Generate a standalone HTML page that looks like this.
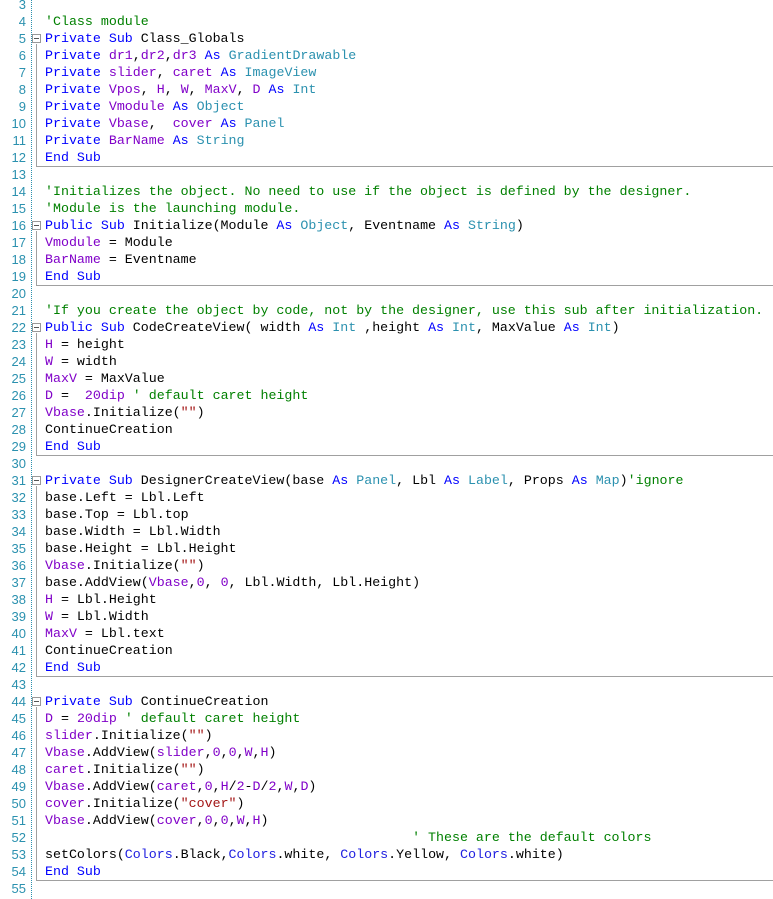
<!DOCTYPE html>
<html><head><meta charset="utf-8"><style>
html,body{margin:0;padding:0;background:#fff;width:773px;height:899px;overflow:hidden;position:relative}
.nums{position:absolute;left:0;top:-4.5px;width:26px;text-align:right;font-family:"Liberation Sans",sans-serif;font-size:13px;color:#2b91af}
.nums div{height:17px;line-height:17px}
.code{position:absolute;left:45px;top:-4.5px;font-family:"Liberation Mono",monospace;font-size:13.3px;color:#000}
.code div{height:17px;line-height:17px;white-space:pre}
.k{color:#0000ff}.v{color:#8000c8}.t{color:#2b91af}.c{color:#008000}.s{color:#a31515}.b{color:#2020e0}
.dot{position:absolute;left:31px;top:0;height:899px;border-left:1px dotted #2b91af}
.f{position:absolute;left:32px;width:7px;height:7px;border:1px solid #999;background:#fff}
.f i{position:absolute;left:1px;top:3px;width:5px;height:1px;background:#555}
.vl{position:absolute;left:36px;width:1px;background:#a0a0a0}
.hl{position:absolute;left:36px;right:0;height:1px;background:#a0a0a0}
</style></head><body>
<div class="dot"></div>
<div class="nums">
<div>3</div><div>4</div><div>5</div><div>6</div><div>7</div><div>8</div><div>9</div><div>10</div><div>11</div><div>12</div><div>13</div><div>14</div><div>15</div><div>16</div><div>17</div><div>18</div><div>19</div><div>20</div><div>21</div><div>22</div><div>23</div><div>24</div><div>25</div><div>26</div><div>27</div><div>28</div><div>29</div><div>30</div><div>31</div><div>32</div><div>33</div><div>34</div><div>35</div><div>36</div><div>37</div><div>38</div><div>39</div><div>40</div><div>41</div><div>42</div><div>43</div><div>44</div><div>45</div><div>46</div><div>47</div><div>48</div><div>49</div><div>50</div><div>51</div><div>52</div><div>53</div><div>54</div><div>55</div>
</div>
<div class="vl" style="top:43.5px;height:122px"></div><div class="hl" style="top:165.5px"></div>
<div class="vl" style="top:230.5px;height:54px"></div><div class="hl" style="top:284.5px"></div>
<div class="vl" style="top:332.5px;height:122px"></div><div class="hl" style="top:454.5px"></div>
<div class="vl" style="top:485.5px;height:190px"></div><div class="hl" style="top:675.5px"></div>
<div class="vl" style="top:706.5px;height:173px"></div><div class="hl" style="top:879.5px"></div>
<div class="f" style="top:33.5px"><i></i></div>
<div class="f" style="top:220.5px"><i></i></div>
<div class="f" style="top:322.5px"><i></i></div>
<div class="f" style="top:475.5px"><i></i></div>
<div class="f" style="top:696.5px"><i></i></div>
<div class="code">
<div> </div>
<div><span class="c">'Class module</span></div>
<div><span class="k">Private Sub</span> Class_Globals</div>
<div><span class="k">Private</span> <span class="v">dr1</span>,<span class="v">dr2</span>,<span class="v">dr3</span> <span class="k">As</span> <span class="t">GradientDrawable</span></div>
<div><span class="k">Private</span> <span class="v">slider</span>, <span class="v">caret</span> <span class="k">As</span> <span class="t">ImageView</span></div>
<div><span class="k">Private</span> <span class="v">Vpos</span>, <span class="v">H</span>, <span class="v">W</span>, <span class="v">MaxV</span>, <span class="v">D</span> <span class="k">As</span> <span class="t">Int</span></div>
<div><span class="k">Private</span> <span class="v">Vmodule</span> <span class="k">As</span> <span class="t">Object</span></div>
<div><span class="k">Private</span> <span class="v">Vbase</span>,  <span class="v">cover</span> <span class="k">As</span> <span class="t">Panel</span></div>
<div><span class="k">Private</span> <span class="v">BarName</span> <span class="k">As</span> <span class="t">String</span></div>
<div><span class="k">End Sub</span></div>
<div> </div>
<div><span class="c">'Initializes the object. No need to use if the object is defined by the designer.</span></div>
<div><span class="c">'Module is the launching module.</span></div>
<div><span class="k">Public Sub</span> Initialize(Module <span class="k">As</span> <span class="t">Object</span>, Eventname <span class="k">As</span> <span class="t">String</span>)</div>
<div><span class="v">Vmodule</span> = Module</div>
<div><span class="v">BarName</span> = Eventname</div>
<div><span class="k">End Sub</span></div>
<div> </div>
<div><span class="c">'If you create the object by code, not by the designer, use this sub after initialization.</span></div>
<div><span class="k">Public Sub</span> CodeCreateView( width <span class="k">As</span> <span class="t">Int</span> ,height <span class="k">As</span> <span class="t">Int</span>, MaxValue <span class="k">As</span> <span class="t">Int</span>)</div>
<div><span class="v">H</span> = height</div>
<div><span class="v">W</span> = width</div>
<div><span class="v">MaxV</span> = MaxValue</div>
<div><span class="v">D</span> =  <span class="v">20dip</span> <span class="c">' default caret height</span></div>
<div><span class="v">Vbase</span>.Initialize(<span class="s">""</span>)</div>
<div>ContinueCreation</div>
<div><span class="k">End Sub</span></div>
<div> </div>
<div><span class="k">Private Sub</span> DesignerCreateView(base <span class="k">As</span> <span class="t">Panel</span>, Lbl <span class="k">As</span> <span class="t">Label</span>, Props <span class="k">As</span> <span class="t">Map</span>)<span class="c">'ignore</span></div>
<div>base.Left = Lbl.Left</div>
<div>base.Top = Lbl.top</div>
<div>base.Width = Lbl.Width</div>
<div>base.Height = Lbl.Height</div>
<div><span class="v">Vbase</span>.Initialize(<span class="s">""</span>)</div>
<div>base.AddView(<span class="v">Vbase</span>,<span class="v">0</span>, <span class="v">0</span>, Lbl.Width, Lbl.Height)</div>
<div><span class="v">H</span> = Lbl.Height</div>
<div><span class="v">W</span> = Lbl.Width</div>
<div><span class="v">MaxV</span> = Lbl.text</div>
<div>ContinueCreation</div>
<div><span class="k">End Sub</span></div>
<div> </div>
<div><span class="k">Private Sub</span> ContinueCreation</div>
<div><span class="v">D</span> = <span class="v">20dip</span> <span class="c">' default caret height</span></div>
<div><span class="v">slider</span>.Initialize(<span class="s">""</span>)</div>
<div><span class="v">Vbase</span>.AddView(<span class="v">slider</span>,<span class="v">0</span>,<span class="v">0</span>,<span class="v">W</span>,<span class="v">H</span>)</div>
<div><span class="v">caret</span>.Initialize(<span class="s">""</span>)</div>
<div><span class="v">Vbase</span>.AddView(<span class="v">caret</span>,<span class="v">0</span>,<span class="v">H</span>/<span class="v">2</span>-<span class="v">D</span>/<span class="v">2</span>,<span class="v">W</span>,<span class="v">D</span>)</div>
<div><span class="v">cover</span>.Initialize(<span class="s">"cover"</span>)</div>
<div><span class="v">Vbase</span>.AddView(<span class="v">cover</span>,<span class="v">0</span>,<span class="v">0</span>,<span class="v">W</span>,<span class="v">H</span>)</div>
<div>                                              <span class="c">' These are the default colors</span></div>
<div>setColors(<span class="b">Colors</span>.Black,<span class="b">Colors</span>.white, <span class="b">Colors</span>.Yellow, <span class="b">Colors</span>.white)</div>
<div><span class="k">End Sub</span></div>
<div> </div>
</div>
</body></html>
